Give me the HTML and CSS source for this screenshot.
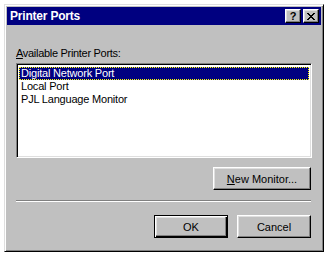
FILE: index.html
```html
<!DOCTYPE html>
<html>
<head>
<meta charset="utf-8">
<link rel="stylesheet" href="styles.css">
</head>
<body>
<div class="window">
  <div class="titlebar">
    <span class="title">Printer Ports</span>
    <div class="tbuttons">
      <span class="tbtn help">?</span>
      <span class="tbtn close"><svg width="8" height="7" viewBox="0 0 8 7"><path d="M0 0h2v1h1v1h2v-1h1v-1h2v1h-1v1h-1v1h-1v1h1v1h1v1h1v1h-2v-1h-1v-1h-2v1h-1v1h-2v-1h1v-1h1v-1h1v-1h-1v-1h-1v-1h-1z" fill="#000"/></svg></span>
    </div>
  </div>
  <div class="content">
    <div class="label"><u>A</u>vailable Printer Ports:</div>
    <div class="listbox">
      <div class="item selected">Digital Network Port</div>
      <div class="item">Local Port</div>
      <div class="item">PJL Language Monitor</div>
    </div>
    <div class="row row-new">
      <button class="btn btn-new"><u>N</u>ew Monitor...</button>
    </div>
    <div class="separator"></div>
    <div class="row row-ok">
      <button class="btn btn-default">OK</button>
      <button class="btn">Cancel</button>
    </div>
  </div>
</div>
</body>
</html>
```
FILE: styles.css
```css
* { box-sizing: border-box; }
html, body { margin: 0; background: #fff; }
body {
  padding: 4px 5px 5px 4px;
  font-family: "Liberation Sans", Arial, sans-serif;
  font-size: 11px;
  color: #000;
}
.window {
  width: 320px;
  height: 248px;
  background: #c0c0c0;
  border: 1px solid;
  border-color: #dfdfdf #000 #000 #dfdfdf;
  box-shadow: inset 1px 1px #fff, inset -1px -1px #808080;
  padding: 2px;
  display: flex;
  flex-direction: column;
}
.titlebar {
  height: 18px;
  background: #000080;
  display: flex;
  align-items: center;
  justify-content: space-between;
  padding-left: 3px;
}
.title {
  color: #fff;
  font-weight: bold;
  font-size: 12px;
  letter-spacing: -0.2px;
}
.tbuttons {
  display: flex;
  gap: 2px;
  margin-right: 2px;
}
.tbtn {
  width: 16px;
  height: 14px;
  background: #c0c0c0;
  border: 1px solid;
  border-color: #fff #000 #000 #fff;
  box-shadow: inset -1px -1px #808080, inset 1px 1px #dfdfdf;
  display: flex;
  align-items: center;
  justify-content: center;
  font-weight: bold;
  font-size: 11px;
  line-height: 12px;
}
.content {
  padding: 22px 9px 0 9px;
  display: flex;
  flex-direction: column;
}
.label {
  height: 13px;
  line-height: 13px;
  letter-spacing: -0.3px;
}
.listbox {
  margin-top: 3px;
  width: 296px;
  height: 95px;
  background: #fff;
  border: 1px solid;
  border-color: #808080 #fff #fff #808080;
  box-shadow: inset 1px 1px #000, inset -1px -1px #dfdfdf;
  padding: 3px 2px 2px 2px;
}
.item {
  height: 13px;
  line-height: 13px;
  padding-left: 2px;
  letter-spacing: -0.2px;
}
.item.selected {
  background: #000080;
  color: #fff;
  outline: 1px dotted #ffff00;
  outline-offset: -1px;
}
.row {
  display: flex;
  justify-content: flex-end;
  gap: 9px;
  padding-right: 1px;
}
.row-new { margin-top: 9px; }
.separator {
  margin-top: 10px;
  height: 2px;
  width: 295px;
  border-top: 1px solid #808080;
  border-bottom: 1px solid #fff;
}
.row-ok { margin-top: 13px; }
.btn {
  font-family: "Liberation Sans", Arial, sans-serif;
  font-size: 11px;
  color: #000;
  width: 74px;
  height: 23px;
  background: #c0c0c0;
  border: 1px solid;
  border-color: #fff #000 #000 #fff;
  box-shadow: inset -1px -1px #808080, inset 1px 1px #dfdfdf;
  padding: 0;
  margin: 0;
}
.btn-new { width: 98px; }
.btn-default {
  border: 1px solid #000;
  box-shadow: inset 1px 1px #fff, inset -1px -1px #000, inset -2px -2px #808080, inset 2px 2px #dfdfdf;
}
```
